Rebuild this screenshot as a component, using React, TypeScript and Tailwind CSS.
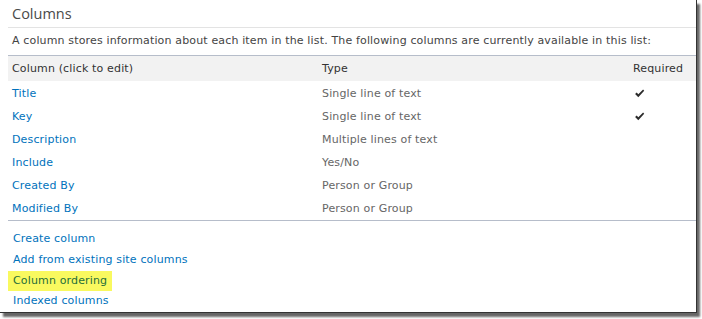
import React from 'react';

type Row = { name: string; type: string; required?: boolean };

const rows: Row[] = [
  { name: 'Title', type: 'Single line of text', required: true },
  { name: 'Key', type: 'Single line of text', required: true },
  { name: 'Description', type: 'Multiple lines of text' },
  { name: 'Include', type: 'Yes/No' },
  { name: 'Created By', type: 'Person or Group' },
  { name: 'Modified By', type: 'Person or Group' },
];

const links = ['Create column', 'Add from existing site columns', 'Column ordering', 'Indexed columns'];

const Check = () => (
  <svg width="11" height="9" viewBox="0 0 10 9" className="block">
    <path d="M0.6 5 L2.2 3.6 L3.8 5.2 L8.6 0.6 L9.7 1.8 L3.8 8.2 Z" fill="#2b2b2b" />
  </svg>
);

const App: React.FC = () => {
  return (
    <div className="w-[702px] h-[319px] bg-white" style={{ fontFamily: '"DejaVu Sans", Verdana, sans-serif' }}>
      <div className="w-[697px] h-[313px] bg-white border-r border-b border-[#333] shadow-[3px_4px_2px_rgba(0,0,0,0.6)] flex flex-col tracking-[0.15px]">
        {/* Section title */}
        <div className="h-[27px] px-[12px] flex items-center text-[14.5px] text-[#4a4a4a] tracking-normal" style={{ fontFamily: '"Open Sans", "Noto Sans", sans-serif' }}>
          Columns
        </div>
        <div className="ml-[8px] border-t border-[#e3e3e3]" />

        {/* Description */}
        <div className="h-[28px] px-[12px] flex items-center text-[11px] text-[#444]">
          A column stores information about each item in the list. The following columns are currently available in this list:
        </div>

        {/* Table */}
        <div className="ml-[8px] border-t border-[#b6bdca]" />
        <div className="ml-[8px] h-[25px] bg-[#f2f2f2] grid grid-cols-[310px_311px_1fr] items-center pl-[4px] text-[11px] text-[#333]">
          <span>Column (click to edit)</span>
          <span>Type</span>
          <span>Required</span>
        </div>
        <div className="flex flex-col mt-[1px]">
          {rows.map((r) => (
            <div key={r.name} className="h-[23px] grid grid-cols-[310px_311px_1fr] items-center pl-[12px] text-[11px]">
              <span className="text-[#0072bc]">{r.name}</span>
              <span className="text-[#666]">{r.type}</span>
              <span className="pl-[1px]">{r.required && <Check />}</span>
            </div>
          ))}
        </div>
        <div className="ml-[8px] border-t border-[#b6bdca]" />

        {/* Links */}
        <div className="pt-[8px] flex flex-col">
          {links.map((l) => (
            <div key={l} className="h-[20.7px] flex items-center text-[11px]">
              {l === 'Column ordering' ? (
                <span className="ml-[8px] px-[5px] h-[20px] flex items-center bg-[#f9f95f] text-[#1f6e3a]">{l}</span>
              ) : (
                <span className="ml-[13px] text-[#0072bc]">{l}</span>
              )}
            </div>
          ))}
        </div>
      </div>
    </div>
  );
};

export default App;
